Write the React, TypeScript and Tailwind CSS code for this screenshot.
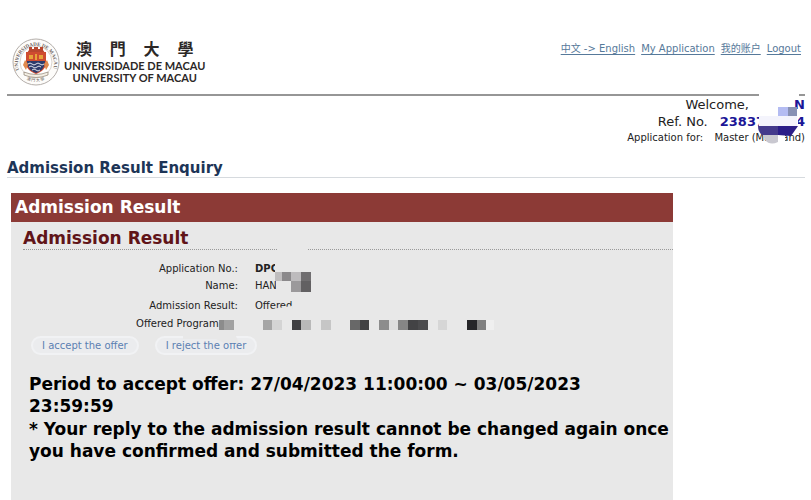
import React from 'react';

interface Cell {
    x: number;
    y: number;
    w: number;
    h: number;
    fill: string;
}

interface Row {
    label: string;
    value: string;
    bold?: boolean;
    gap: string;
}

const LINKS = ['中文 -> English', 'My Application', '我的账户', 'Logout'];

const ROWS: Row[] = [
    { label: 'Application No.:', value: 'DPC', bold: true, gap: '' },
    { label: 'Name:', value: 'HAN', gap: 'pt-px' },
    { label: 'Admission Result:', value: 'Offered', gap: 'pt-1' },
    { label: 'Offered Programme:', value: '', gap: 'pt-0.5' },
];

const NAME_CELLS: Cell[] = [
    { x: 252, y: 50, w: 7, h: 9, fill: '#bfbdbe' },
    { x: 259, y: 50, w: 9, h: 9, fill: '#8b898b' },
    { x: 268, y: 50, w: 10, h: 9, fill: '#bdbbbd' },
    { x: 278, y: 50, w: 10, h: 9, fill: '#706e70' },
    { x: 268, y: 59, w: 10, h: 11, fill: '#9b999b' },
    { x: 278, y: 59, w: 10, h: 11, fill: '#626062' },
];

const PROGRAM_CELLS: Cell[] = [
    { x: 196, y: 98, w: 5, h: 10, fill: '#8c8c8c' },
    { x: 201, y: 98, w: 10, h: 10, fill: '#a2a2a2' },
    { x: 240, y: 98, w: 9, h: 10, fill: '#a5a5a5' },
    { x: 249, y: 98, w: 10, h: 10, fill: '#d4d4d4' },
    { x: 269, y: 98, w: 9, h: 10, fill: '#404042' },
    { x: 278, y: 98, w: 10, h: 10, fill: '#b9b9b9' },
    { x: 298, y: 98, w: 10, h: 10, fill: '#c6c6c6' },
    { x: 327, y: 98, w: 10, h: 10, fill: '#686868' },
    { x: 337, y: 98, w: 9, h: 10, fill: '#414143' },
    { x: 356, y: 98, w: 10, h: 10, fill: '#8d8d8d' },
    { x: 366, y: 98, w: 9, h: 10, fill: '#dedede' },
    { x: 375, y: 98, w: 10, h: 10, fill: '#868686' },
    { x: 385, y: 98, w: 10, h: 10, fill: '#434345' },
    { x: 395, y: 98, w: 10, h: 10, fill: '#4b4b4d' },
    { x: 415, y: 98, w: 9, h: 10, fill: '#d6d6d6' },
    { x: 444, y: 98, w: 10, h: 10, fill: '#262629' },
    { x: 454, y: 98, w: 9, h: 10, fill: '#808080' },
    { x: 463, y: 98, w: 8, h: 10, fill: '#efefef' },
];

const Mosaic: React.FC<{ cells: Cell[] }> = ({ cells }) => (
    <>
        {cells.map((c, idx) => (
            <rect key={idx} x={c.x} y={c.y} width={c.w} height={c.h} fill={c.fill} />
        ))}
    </>
);

const Seal: React.FC = () => (
    <svg viewBox="0 0 48 48" className="mt-0.5 h-12 w-12 shrink-0" aria-hidden="true">
        <defs>
            <path id="arcTop" d="M8 34 A18 18 0 1 1 40 34" />
            <path id="arcBottom" d="M10 38 A20 20 0 0 0 38 38" />
        </defs>
        <circle cx="24" cy="24" r="23" fill="#fdfcfa" stroke="#b4aeaa" strokeWidth="1" />
        <circle cx="24" cy="24" r="16" fill="#fff" stroke="#d0c8c0" strokeWidth="0.8" />
        <text fontFamily="Liberation Serif, serif" fontSize="5" fontWeight="bold" fill="#6b5f5c">
            <textPath href="#arcTop" startOffset="3%">UNIVERSIDADE DE MACAU</textPath>
        </text>
        <text fontFamily="Noto Sans CJK TC, sans-serif" fontSize="4" fill="#6b5f5c">
            <textPath href="#arcBottom" startOffset="18%">澳 門 大 學</textPath>
        </text>
        <path d="M17 12v-3h3v2h2v-2h4v2h2v-2h3v3l2 3H15z" fill="#b9472f" />
        <path d="M14 14h20v11c0 6-5 9-10 11-5-2-10-5-10-11z" fill="#cf4c30" />
        <path d="M15 23h18c0 7-4 10-9 12-5-2-9-5-9-12z" fill="#2d3b6b" />
        <path d="M16 26q2-2 4 0t4 0 4 0 4 0M17 29q2-2 4 0t4 0 4 0M20 32q2-2 4 0t4 0" fill="none" stroke="#dfe3ec" />
        <path d="M17 17h4v4h-4zM27 17h4v4h-4zM23 16h2v6h-2z" fill="#e6a43a" />
        <path d="M13 22l3 4-2 6-3-5zM35 22l-3 4 2 6 3-5z" fill="#e08a4e" />
        <path d="M12 34q12 5 24 0v3q-12 5-24 0z" fill="#f4efe4" stroke="#7b6b5d" strokeWidth="0.6" />
    </svg>
);

const App: React.FC = () => {
    return (
        <div className="min-h-screen bg-white pt-9 pl-[7px] pr-[6px] font-['DejaVu_Sans','Noto_Sans_CJK_SC',sans-serif] text-black">
            <header className="flex h-[60px] items-start justify-between border-b-2 border-[#969696]">
                <div className="flex items-start pl-[5px]">
                    <Seal />
                    <div className="ml-1 flex flex-col items-center font-['Lato',sans-serif] font-bold text-[#2c2827]">
                        <div className="flex w-full justify-between pl-3 pr-3 pt-px font-['Noto_Sans_CJK_TC',sans-serif] text-[16px] leading-[23px]">
                            <span>澳</span>
                            <span>門</span>
                            <span>大</span>
                            <span>學</span>
                        </div>
                        <span className="text-[11px] leading-[12px] whitespace-nowrap">UNIVERSIDADE DE MACAU</span>
                        <span className="text-[11px] leading-[12px] whitespace-nowrap">UNIVERSITY OF MACAU</span>
                    </div>
                </div>
                <nav className="flex gap-1.5 pr-1 pt-[5px] text-[10px] leading-[16px] text-[#56799a]">
                    {LINKS.map(link => (
                        <a key={link} href="#" className="underline underline-offset-2">{link}</a>
                    ))}
                </nav>
            </header>

            {/* Applicant details */}
            <section className="relative flex flex-col items-end text-[13px] leading-[17px] text-[#222]">
                <div className="flex">
                    <span>Welcome,</span>
                    <span className="w-14 text-right font-bold text-[#1b1697]">N</span>
                </div>
                <div className="flex">
                    <span>Ref. No.</span>
                    <span className="ml-3 font-bold text-[#1b1697]">23837</span>
                    <span className="w-10 text-right font-bold text-[#1b1697]">4</span>
                </div>
                <div className="text-[10px] leading-[15px]">Application for: <span className="ml-2">Master (Mainland)</span></div>
                <svg viewBox="0 0 60 58" className="pointer-events-none absolute -top-2 right-0 h-[58px] w-[60px]" aria-hidden="true">
                    <path d="M16 0H54V10L49 12V20L53 24V38L40 45V56H21V50L19 46V36L14 34V0z" fill="#fff" />
                    <rect x="33" y="19" width="10" height="9" fill="#b4bcf2" />
                    <rect x="43" y="19" width="9" height="9" fill="#8891b4" />
                    <rect x="14" y="28" width="38" height="10" fill="#f4f4fc" />
                    <path d="M13 38h21v9H17q-4-3-4-9z" fill="#443a8c" />
                    <path d="M33 38h20l-7 10-13-1z" fill="#2b1d88" />
                    <path d="M18 47h15v7q-8 4-13-2z" fill="#c9c8d0" />
                </svg>
            </section>

            <h1 className="mt-[14px] border-b border-[#d6dade] text-[15px] leading-[18px] font-bold text-[#1d3557]">Admission Result Enquiry</h1>

            <main className="mt-[15px] ml-1 min-h-[308px] w-[83%] bg-[#e8e8e8]">
                <h2 className="bg-[#8c3a36] px-1 py-1 text-[17px] leading-[21px] font-bold text-white">Admission Result</h2>
                <div className="relative pl-3">
                    <h3 className="border-b border-dotted border-[#999] pt-1.5 text-[17px] leading-[21px] font-bold text-[#601418]">Admission Result</h3>
                    <table className="mt-[11px] text-[10px] leading-[16px] text-[#222]">
                        <tbody>
                            {ROWS.map(row => (
                                <tr key={row.label}>
                                    <th scope="row" className={`w-[215px] text-right font-normal ${row.gap}`}>{row.label}</th>
                                    <td className={`pl-[17px] ${row.gap} ${row.bold ? 'font-bold' : ''}`}>{row.value}</td>
                                </tr>
                            ))}
                        </tbody>
                    </table>
                    <div className="flex gap-4 pl-2 pt-1">
                        <button type="button" className="rounded-full border-2 border-[#f1f2f4] bg-[#ebecee] px-[9px] text-[10px] leading-[15px] text-[#5b80b2]">I accept the offer</button>
                        <button type="button" className="rounded-full border-2 border-[#f1f2f4] bg-[#ebecee] px-[9px] text-[10px] leading-[15px] text-[#5b80b2]">I reject the offer</button>
                    </div>
                    <svg viewBox="0 0 480 140" className="pointer-events-none absolute left-3 top-0 h-[140px] w-[480px]" aria-hidden="true">
                        <path d="M254 22h31v12h-31zM252 42h6v12h-9v-4h3zM253 59h15v12h-15z" fill="#e8e8e8" />
                        <path d="M243 88l12-2 14-2v8h-26z" fill="#e8e8e8" />
                        <path d="M196 94h24v16h-24z" fill="#e8e8e8" />
                        <path d="M160 112h52l4 9h-15l-8-4h-33z" fill="#e8e8e8" />
                        <Mosaic cells={NAME_CELLS} />
                        <Mosaic cells={PROGRAM_CELLS} />
                    </svg>
                    <div className="pl-1.5 pt-[18px] text-[17px] leading-[22px] font-bold">
                        <p>Period to accept offer: 27/04/2023 11:00:00 ~ 03/05/2023<br />23:59:59</p>
                        <p className="mt-px">* Your reply to the admission result cannot be changed again once you have confirmed and submitted the form.</p>
                    </div>
                </div>
            </main>
        </div>
    );
};

export default App;
